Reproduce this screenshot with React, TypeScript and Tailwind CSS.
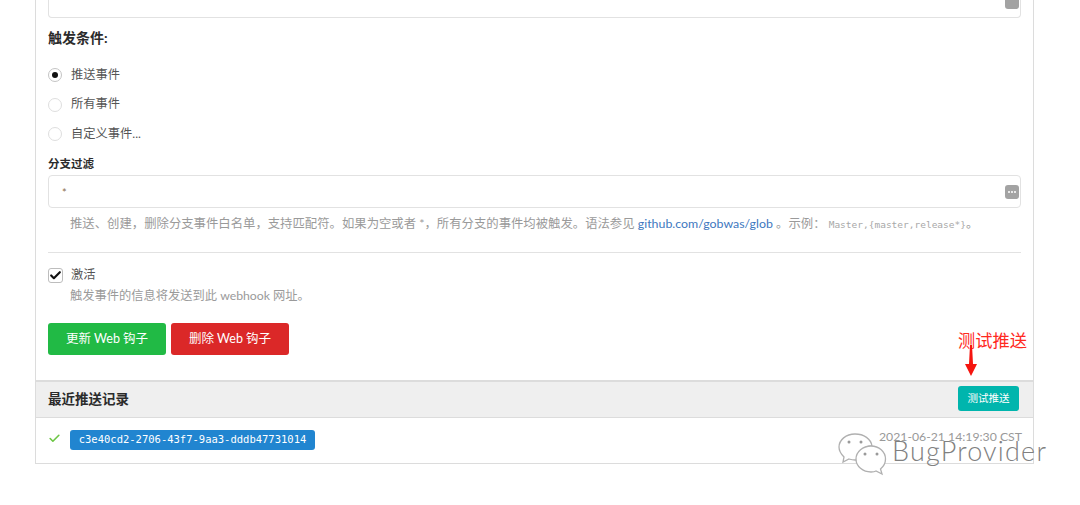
import { Check } from 'lucide-react';

const font = "font-['Lato','Noto_Sans_CJK_SC',sans-serif]";
const mono = "font-['DejaVu_Sans_Mono','Noto_Sans_CJK_SC',monospace]";

const branchHelp = '推送、创建\uFF0C删除分支事件白名单\uFF0C支持匹配符。如果为空或者 *\uFF0C所有分支的事件均被触发。语法参见';
const exampleLabel = ' 。示例\uFF1A ';

function KeyButton() {
  return (
    <div className="absolute right-[1px] top-1/2 -translate-y-1/2 w-[14px] h-[14px] rounded-[3px] bg-[#a3a3a3] flex items-center justify-center gap-[1px]">
      <span className="w-[2px] h-[2px] rounded-full bg-white" />
      <span className="w-[2px] h-[2px] rounded-full bg-white" />
      <span className="w-[2px] h-[2px] rounded-full bg-white" />
    </div>
  );
}

function Radio({ label, checked }: { label: string; checked?: boolean }) {
  return (
    <div className="flex items-center h-[16px] gap-[9px]">
      <span className={`w-[14px] h-[14px] rounded-full border flex items-center justify-center ${checked ? 'border-[#c4c4c4]' : 'border-[#dedede]'}`}>
        {checked && <span className="w-[6px] h-[6px] rounded-full bg-[#111]" />}
      </span>
      <span className="text-[12.25px] text-[#555] leading-none">{label}</span>
    </div>
  );
}

function Watermark() {
  return (
    <div className="absolute left-[838px] top-[432px] flex items-start">
      <svg width="50" height="44" viewBox="0 0 50 44" fill="white" stroke="#b0b0b0" strokeWidth="1.3">
        <path d="M17 2C8 2 1 8 1 15c0 4 2 7 5 10l-1 5 6-3c2 .6 4 1 6 1 1 0 2 0 3-.2C19 21 26 14 34 14 33 7 26 2 17 2z" />
        <path d="M33 14c-8 0-15 5.500-15 13s7 13 15 13c2 0 4-.4 5-1l6 3-1.500-5c3-2.500 5-6 5-10 0-7.500-6.500-13-14.500-13z" />
        <circle cx="11" cy="10" r="1.500" fill="#9a9a9a" stroke="none" />
        <circle cx="23" cy="10" r="1.500" fill="#9a9a9a" stroke="none" />
        <circle cx="27" cy="22" r="1.500" fill="#9a9a9a" stroke="none" />
        <circle cx="39" cy="22" r="1.500" fill="#9a9a9a" stroke="none" />
      </svg>
      <span className="ml-[4px] mt-[4px] text-[27px] leading-[30px] tracking-[1.2px] font-['Lato',sans-serif] font-light text-[#808080]">
        BugProvider
      </span>
    </div>
  );
}

function Annotation() {
  return (
    <div className="absolute left-[958px] top-[331px] w-[70px] flex flex-col items-start">
      <span className="text-[17.25px] leading-[20px] text-[#ff2a1f] whitespace-nowrap">测试推送</span>
      <svg width="14" height="32" viewBox="0 0 14 32" className="-mt-[6px] ml-[6px]">
        <path d="M6 0h2l1 19h4L7 31 1 19h4z" fill="#f5150f" />
      </svg>
    </div>
  );
}

export default function App() {
  return (
    <div className={`relative w-[1080px] h-[505px] overflow-hidden bg-white ${font}`}>
      <div className="ml-[35px] w-[999px] h-[464px] border-x border-b border-[#dcdcdc] flex flex-col">
        <div className="px-[12px] flex-1">
          <div className="relative h-[18px] border-x border-b border-[#e2e2e2] rounded-b-[4px]">
            <div className="absolute right-[1px] -top-[5px] w-[14px] h-[14px] rounded-[3px] bg-[#a3a3a3]" />
          </div>

          <h4 className="mt-[10px] text-[14px] leading-[20px] font-bold text-[#2b2b2b]">触发条件:</h4>

          <div className="mt-[19px] flex flex-col gap-[13.500px]">
            <Radio label="推送事件" checked />
            <Radio label="所有事件" />
            <Radio label="自定义事件..." />
          </div>

          <label className="block mt-[15px] text-[11.500px] leading-[14px] font-bold text-[#2b2b2b]">分支过滤</label>
          <div className="relative mt-[4px] h-[33px] border border-[#e2e2e2] rounded-[4px] flex items-center pl-[13px]">
            <span className="mt-[3px] text-[11px] text-[#8a6d4b]">*</span>
            <KeyButton />
          </div>

          <p className="mt-[8px] ml-[22px] h-[16px] text-[12.375px] leading-[16px] text-[#9a9a9a] whitespace-nowrap">
            {branchHelp} <a className="text-[#4078c0]">github.com/gobwas/glob</a>
            {exampleLabel}
            <code className={`text-[9.500px] text-[#a8a8a8] ${mono}`}>Master,{'{'}master,release*{'}'}</code>。
          </p>

          <div className="mt-[20px] border-t border-[#e2e2e2]" />

          <div className="mt-[14px] flex items-center h-[16px] gap-[8px]">
            <span className="w-[15px] h-[15px] rounded-[3px] border border-[#bdbdbd] flex items-center justify-center">
              <Check size={13} strokeWidth={4} className="text-[#111]" />
            </span>
            <span className="text-[12.25px] leading-none text-[#555]">激活</span>
          </div>
          <p className="mt-[5px] ml-[22px] text-[12.25px] leading-[16px] text-[#9a9a9a]">触发事件的信息将发送到此 webhook 网址。</p>

          <div className="mt-[19px] flex gap-[5px]">
            <button className="w-[118px] h-[32px] rounded-[3px] bg-[#21ba45] text-white text-[12.500px]">更新 Web 钩子</button>
            <button className="w-[118px] h-[32px] rounded-[3px] bg-[#db2828] text-white text-[12.500px]">删除 Web 钩子</button>
          </div>
        </div>

        <div className="h-[38px] border-t-2 border-b border-[#dcdcdc] bg-[#efefef] flex items-center justify-between pl-[12px] pr-[14px]">
          <h4 className="text-[13.500px] font-bold text-[#2b2b2b]">最近推送记录</h4>
          <button className="-mt-[2px] w-[61px] h-[25px] rounded-[3px] bg-[#00b5ad] text-white text-[10.500px]">测试推送</button>
        </div>

        <div className="h-[45px] flex items-center pl-[12px] pr-[11px]">
          <Check size={13} strokeWidth={3} className="text-[#6cc644] -mt-[4px]" />
          <span className={`-mt-[2px] ml-[9px] w-[245px] h-[20px] rounded-[3px] bg-[#2185d0] text-white text-[10.500px] flex items-center justify-center ${mono}`}>
            c3e40cd2-2706-43f7-9aa3-dddb47731014
          </span>
          <span className="ml-auto -mt-[6px] text-[12.25px] text-[#999]">2021-06-21 14:19:30 CST</span>
        </div>
      </div>

      <Annotation />
      <Watermark />
    </div>
  );
}
